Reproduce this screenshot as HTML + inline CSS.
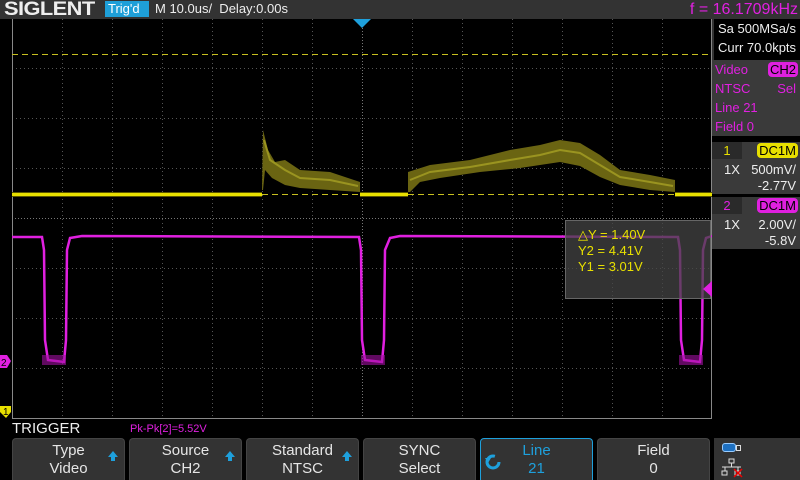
<!DOCTYPE html>
<html><head><meta charset="utf-8"><style>
*{margin:0;padding:0;box-sizing:border-box}
body{width:800px;height:480px;background:#000;overflow:hidden;position:relative;font-family:"Liberation Sans",sans-serif;color:#ddd}
.a{position:absolute;white-space:nowrap}
.btn{position:absolute;top:438px;height:42px;width:113px;background:#333;border:1px solid #444;border-bottom:none;border-radius:4px 4px 0 0;text-align:center;font-size:15px;line-height:18px;padding-top:3px;color:#e6e6e6}
.arr{position:absolute;right:6px;top:12px;width:0;height:0;border-left:5px solid transparent;border-right:5px solid transparent;border-bottom:6px solid #1ea0dc}
.arr:after{content:"";position:absolute;left:-2px;top:6px;width:4px;height:4px;background:#1ea0dc}
.rp{position:absolute;left:712px;width:88px;font-size:13px;white-space:nowrap}
</style></head><body>
<div class="a" style="left:0;top:0;width:800px;height:19px;background:#333"></div>
<div class="a" style="left:4px;top:0;font-size:19px;font-weight:bold;color:#eee;letter-spacing:-0.5px;line-height:19px;transform:scaleX(1.15);transform-origin:left">SIGLENT</div>
<div class="a" style="left:105px;top:1px;width:44px;height:16px;background:#1e9fd8;color:#fff;font-size:13px;line-height:16px;padding-left:3px">Trig'd</div>
<div class="a" style="left:155px;top:1px;font-size:13px;line-height:16px;color:#eee">M 10.0us/&nbsp; Delay:0.00s</div>
<div class="a" style="right:2px;top:0;font-size:16px;line-height:19px;color:#e020e0">f = 16.1709kHz</div>

<svg class="a" style="left:0;top:0" width="800" height="480">
<g stroke="#555" stroke-width="1" stroke-dasharray="1,3">
<line x1="62.5" y1="19" x2="62.5" y2="418"/><line x1="112.5" y1="19" x2="112.5" y2="418"/><line x1="162.5" y1="19" x2="162.5" y2="418"/><line x1="212.5" y1="19" x2="212.5" y2="418"/><line x1="262.5" y1="19" x2="262.5" y2="418"/><line x1="312.5" y1="19" x2="312.5" y2="418"/><line x1="412.5" y1="19" x2="412.5" y2="418"/><line x1="462.5" y1="19" x2="462.5" y2="418"/><line x1="512.5" y1="19" x2="512.5" y2="418"/><line x1="562.5" y1="19" x2="562.5" y2="418"/><line x1="612.5" y1="19" x2="612.5" y2="418"/><line x1="662.5" y1="19" x2="662.5" y2="418"/>
<line x1="12" y1="68.5" x2="712" y2="68.5"/><line x1="12" y1="118.5" x2="712" y2="118.5"/><line x1="12" y1="168.5" x2="712" y2="168.5"/><line x1="12" y1="268.5" x2="712" y2="268.5"/><line x1="12" y1="318.5" x2="712" y2="318.5"/><line x1="12" y1="368.5" x2="712" y2="368.5"/>
</g>
<g stroke="#777" stroke-width="1" stroke-dasharray="1,2"><line x1="362.5" y1="19" x2="362.5" y2="418"/><line x1="12" y1="218.5" x2="712" y2="218.5"/></g>
<line x1="12.5" y1="19" x2="12.5" y2="418" stroke="#888"/>
<line x1="12" y1="418.5" x2="712" y2="418.5" stroke="#888"/>
<line x1="711.5" y1="19" x2="711.5" y2="418" stroke="#888"/>
<line x1="12" y1="54.5" x2="712" y2="54.5" stroke="#c8c020" stroke-dasharray="6,4"/>
<polygon points="353,19 371,19 362,28" fill="#1ea0dc"/>
<!-- yellow -->
<line x1="262" y1="194.5" x2="408" y2="194.5" stroke="#c8c020" stroke-dasharray="6,4"/>
<line x1="408" y1="194.5" x2="675" y2="194.5" stroke="#c8c020" stroke-dasharray="6,4"/>
<polygon points="262,190 263,130 268,150 275,162 285,160 300,170 330,172 360,182 360,192 330,190 300,188 285,185 272,178 265,170 263,190" fill="#6a6412"/>
<polygon points="408,192 408,172 430,165 470,160 510,150 540,145 560,140 580,143 600,155 620,170 650,175 675,180 675,192 650,190 620,185 600,177 580,166 560,162 520,168 480,172 440,178 420,182 410,192" fill="#6a6412"/>
<polyline points="264,140 270,160 285,170 300,178 330,180 358,186" fill="none" stroke="#9a9420" stroke-width="2"/>
<polyline points="410,180 430,172 470,167 510,160 540,155 560,150 580,153 600,165 620,177 650,182 673,186" fill="none" stroke="#9a9420" stroke-width="2"/>
<rect x="12" y="192" width="250" height="5" fill="#5a5600"/><rect x="360" y="192" width="48" height="5" fill="#5a5600"/><rect x="675" y="192" width="37" height="5" fill="#5a5600"/>
<rect x="12" y="193" width="250" height="3" fill="#e8e000"/><rect x="360" y="193" width="48" height="3" fill="#e8e000"/><rect x="675" y="193" width="37" height="3" fill="#e8e000"/>
<!-- magenta -->
<g fill="none" stroke="#e020e0" stroke-width="2.5">
<polyline points="12,237 42,237 44,250 45,340 48,360 64,362 66,340 67,250 70,238 82,236 359,237 361,250 362,340 365,360 382,362 384,340 385,250 390,238 400,236 678,237 680,250 681,340 684,360 700,362 702,340 703,250 706,238 712,236"/>
</g>
<rect x="42" y="355" width="24" height="10" fill="#a010a0" opacity=".6"/><rect x="361" y="355" width="24" height="10" fill="#a010a0" opacity=".6"/><rect x="679" y="355" width="24" height="10" fill="#a010a0" opacity=".6"/>
<rect x="565.5" y="220.5" width="145" height="78" fill="#444" fill-opacity=".75" stroke="#666"/>
<polygon points="712,281 703,289 712,297" fill="#e020e0"/>
<polygon points="0,355 7,355 11,361 7,368 0,368" fill="#e020e0"/>
<text x="1" y="366" font-size="10" fill="#000" font-family="Liberation Sans">2</text>
<polygon points="0,406 11,406 11,412 6,418 0,412" fill="#e8e000"/>
<text x="3" y="415" font-size="10" fill="#000" font-family="Liberation Sans">1</text>
</svg>
<div class="a" style="left:578px;top:227px;font-size:13px;line-height:16px;color:#e8e000">△Y = 1.40V<br>Y2 = 4.41V<br>Y1 = 3.01V</div>

<div class="rp" style="top:19px;height:41px;background:#000;border-left:2px solid #333;color:#eee;padding-left:4px;line-height:19px">Sa 500MSa/s<br>Curr 70.0kpts</div>
<div class="rp" style="top:60px;height:76px;background:#3a3a3a;color:#e020e0;padding-left:3px;line-height:19px">Video<span style="position:absolute;right:2px;top:2px;background:#e020e0;color:#000;border-radius:4px;padding:0 2px;line-height:15px">CH2</span><br>NTSC<span style="position:absolute;right:4px">Sel</span><br>Line 21<br>Field 0</div>
<div class="rp" style="top:142px;height:52px;background:#3a3a3a;color:#eee">
<div class="a" style="left:0;top:0;width:30px;height:17px;background:#2a2a2a;color:#e8e000;text-align:center;line-height:17px">1</div>
<div class="a" style="right:2px;top:1px;background:#e8e000;color:#000;border-radius:4px;padding:0 2px;line-height:15px">DC1M</div>
<div class="a" style="left:12px;top:20px">1X</div><div class="a" style="right:4px;top:20px">500mV/</div><div class="a" style="right:4px;top:36px">-2.77V</div></div>
<div class="rp" style="top:197px;height:52px;background:#3a3a3a;color:#eee">
<div class="a" style="left:0;top:0;width:30px;height:17px;background:#2a2a2a;color:#e020e0;text-align:center;line-height:17px">2</div>
<div class="a" style="right:2px;top:1px;background:#e020e0;color:#000;border-radius:4px;padding:0 2px;line-height:15px">DC1M</div>
<div class="a" style="left:12px;top:20px">1X</div><div class="a" style="right:4px;top:20px">2.00V/</div><div class="a" style="right:4px;top:36px">-5.8V</div></div>

<div class="a" style="left:12px;top:420px;font-size:15px;color:#eee">TRIGGER</div>
<div class="a" style="left:130px;top:423px;font-size:11px;color:#e020e0">Pk-Pk[2]=5.52V</div>
<div class="btn" style="left:12px">Type<br>Video<i class="arr"></i></div>
<div class="btn" style="left:129px">Source<br>CH2<i class="arr"></i></div>
<div class="btn" style="left:246px">Standard<br>NTSC<i class="arr"></i></div>
<div class="btn" style="left:363px">SYNC<br>Select</div>
<div class="btn" style="left:480px;border:1px solid #1ea0dc;border-bottom:none;color:#1ea0dc">Line<br>21
<svg class="a" style="left:3px;top:14px" width="18" height="18"><circle cx="9" cy="9" r="6" fill="none" stroke="#1ea0dc" stroke-width="3" stroke-dasharray="30,8"/><polygon points="1,5 7,5 4,10" fill="#1ea0dc"/></svg></div>
<div class="btn" style="left:597px">Field<br>0</div>
<div class="a" style="left:714px;top:438px;width:86px;height:42px;background:#333"></div>
<div class="a" style="left:722px;top:443px;width:14px;height:9px;border-radius:3px;background:#1e70c0;border:1px solid #9cf"></div>
<div class="a" style="left:736px;top:445px;width:5px;height:6px;border:1px solid #ddd"></div>
<svg class="a" style="left:720px;top:458px" width="24" height="20"><g fill="none" stroke="#ddd"><rect x="9" y="1" width="5" height="4"/><path d="M11.5 5V9M2 9H21M5 9V13M18 9V13"/><rect x="2" y="13" width="5" height="4"/><rect x="15" y="13" width="5" height="4"/></g><path d="M14 11L22 19M22 11L14 19" stroke="#e00" stroke-width="1.5"/></svg>
</body></html>
